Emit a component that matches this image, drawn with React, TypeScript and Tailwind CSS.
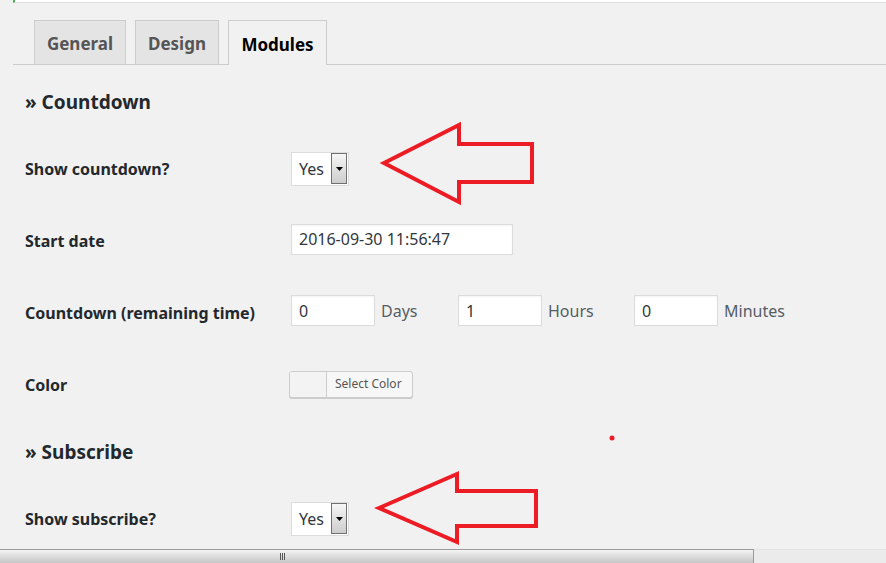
import React from "react";

const font = { fontFamily: '"Noto Sans", "Open Sans", Arial, sans-serif' };

function Select() {
  return (
    <div className="flex h-[34px] w-[58px] items-center border border-[#dcdcdc] bg-white pl-[7px] pr-[1px]">
      <span className="flex-1 text-[16px] text-[#32373c]">Yes</span>
      <div className="flex h-[31px] w-[16px] items-center justify-center border border-[#707070] bg-gradient-to-b from-[#f6f6f6] to-[#cdcdcd]">
        <svg width="7" height="4" viewBox="0 0 7 4">
          <polygon points="0,0 7,0 3.5,4" fill="#000" />
        </svg>
      </div>
    </div>
  );
}

function Input({ value, w }: { value: string; w: string }) {
  return (
    <div
      className={`flex h-[31px] items-center border border-[#dcdcdc] bg-white pl-[7px] text-[16px] text-[#32373c] shadow-[inset_0_1px_2px_rgba(0,0,0,0.05)] ${w}`}
    >
      {value}
    </div>
  );
}

function Row({ label, children, shift }: { label: string; children: React.ReactNode; shift?: string }) {
  return (
    <div className="flex h-[72px] items-center">
      <div className="w-[266px] text-[16px] font-bold text-[#23282d]">{label}</div>
      <div className={`flex items-center ${shift ?? ""}`}>{children}</div>
    </div>
  );
}

export default function App() {
  return (
    <div
      className="relative flex h-[563px] w-[886px] flex-col overflow-hidden bg-[#f1f1f1]"
      style={font}
    >
      {/* top notice strip */}
      <div className="ml-[13px] h-[3px] shrink-0 border-b border-l-2 border-b-[#dedede] border-l-[#46b450] bg-white" />

      {/* tabs */}
      <div className="ml-[13px] mt-[17px] flex h-[45px] shrink-0 items-end gap-[9px] border-b border-[#cccccc] pl-[21px]">
        <div className="flex h-[44px] w-[92px] items-center justify-center border border-b-0 border-[#cccccc] bg-[#e4e4e4] pt-[3px] text-[17px] font-bold text-[#555555]">
          General
        </div>
        <div className="flex h-[44px] w-[84px] items-center justify-center border border-b-0 border-[#cccccc] bg-[#e4e4e4] pt-[3px] text-[17px] font-bold text-[#555555]">
          Design
        </div>
        <div className="-mb-px flex h-[45px] w-[99px] items-center justify-center border border-b-0 border-[#cccccc] bg-[#f1f1f1] pt-[3px] text-[17px] font-bold text-[#000000]">
          Modules
        </div>
      </div>

      {/* content */}
      <div className="min-h-0 flex-1 overflow-hidden pl-[25px]">
        <div className="flex h-[68px] items-center pt-[6px] text-[19px] font-bold text-[#23282d]">
          » Countdown
        </div>
        <Row label="Show countdown?" shift="-mt-[1px]">
          <Select />
        </Row>
        <Row label="Start date" shift="-mt-[4px]">
          <Input value="2016-09-30 11:56:47" w="w-[222px]" />
        </Row>
        <Row label="Countdown (remaining time)" shift="-mt-[5px]">
          <Input value="0" w="w-[84px]" />
          <span className="ml-[6px] w-[77px] text-[16px] text-[#555d66]">Days</span>
          <Input value="1" w="w-[84px]" />
          <span className="ml-[6px] w-[86px] text-[16px] text-[#555d66]">Hours</span>
          <Input value="0" w="w-[84px]" />
          <span className="ml-[6px] text-[16px] text-[#555d66]">Minutes</span>
        </Row>
        <Row label="Color" shift="-mt-[2px]">
          <div className="-ml-[2px] flex h-[27px] w-[124px] items-stretch overflow-hidden rounded-[3px] border border-[#cccccc] bg-[#f7f7f7] shadow-[0_1px_0_#cccccc]">
            <div className="w-[37px] border-r border-[#cccccc] bg-[#f3f3f3]" />
            <div className="flex flex-1 items-center pl-[8px] text-[12px] text-[#555555]">Select Color</div>
          </div>
        </Row>
        <div className="flex h-[62px] items-center text-[19px] font-bold text-[#23282d]">
          » Subscribe
        </div>
        <Row label="Show subscribe?" shift="-mt-[1px]">
          <Select />
        </Row>
      </div>

      {/* horizontal scrollbar */}
      <div className="flex h-[14px] shrink-0">
        <div className="relative flex w-[754px] items-center justify-center border-r border-t border-[#9a9a9a] bg-gradient-to-b from-[#f3f3f3] to-[#c6c6c6]">
          <div className="absolute left-[280px] top-[3px] flex gap-[1px]">
            <div className="h-[7px] w-px bg-[#555]" />
            <div className="h-[7px] w-px bg-[#555]" />
            <div className="h-[7px] w-px bg-[#555]" />
          </div>
        </div>
        <div className="flex-1 border-t border-[#e4e4e4] bg-[#ebebeb]" />
      </div>

      {/* annotation overlay */}
      <svg
        className="pointer-events-none absolute left-0 top-0"
        width="886"
        height="563"
        viewBox="0 0 886 563"
      >
        <polygon
          points="384,163 459,125 459,144 532,144 532,182 459,182 459,202"
          fill="none"
          stroke="#ed1c24"
          strokeWidth="4"
          strokeLinejoin="miter"
        />
        <polygon
          points="379,508 457,474 457,491 536,491 536,526 457,526 457,542"
          fill="none"
          stroke="#ed1c24"
          strokeWidth="4"
          strokeLinejoin="miter"
        />
        <circle cx="612" cy="438" r="2.5" fill="#ed1c24" />
      </svg>
    </div>
  );
}
